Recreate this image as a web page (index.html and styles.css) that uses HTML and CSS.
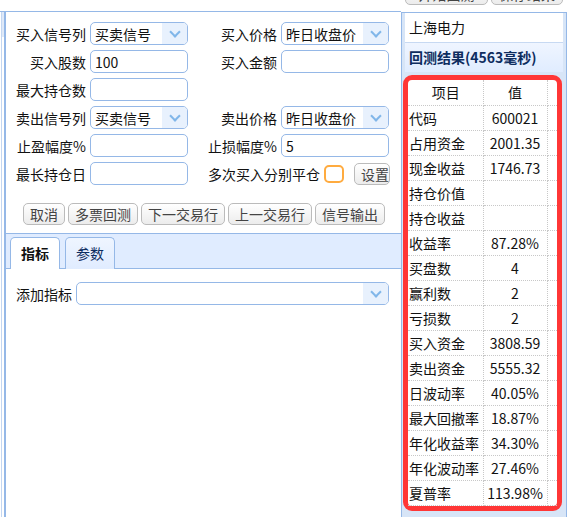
FILE: index.html
```html
<!DOCTYPE html>
<html lang="zh-CN">

<head>
    <meta charset="UTF-8">
    <title>回测</title>
    <link rel="stylesheet" href="styles.css">
</head>

<body>
    <div class="page">
        <!-- 左侧：参数设置 -->
        <div class="left">
            <div class="edge"><div class="edge-cap"></div></div>
            <div class="main">
                <div class="form">
                    <div class="row">
                        <label class="lbl">买入信号列</label>
                        <div class="combo w1"><span class="combo-text">买卖信号</span><span class="combo-arrow"></span></div>
                        <label class="lbl2">买入价格</label>
                        <div class="combo w2"><span class="combo-text">昨日收盘价</span><span class="combo-arrow"></span></div>
                    </div>
                    <div class="row">
                        <label class="lbl">买入股数</label>
                        <input class="textbox w1" type="text" value="100">
                        <label class="lbl2">买入金额</label>
                        <input class="textbox w2" type="text">
                    </div>
                    <div class="row">
                        <label class="lbl">最大持仓数</label>
                        <input class="textbox w1" type="text">
                    </div>
                    <div class="row">
                        <label class="lbl">卖出信号列</label>
                        <div class="combo w1"><span class="combo-text">买卖信号</span><span class="combo-arrow"></span></div>
                        <label class="lbl2">卖出价格</label>
                        <div class="combo w2"><span class="combo-text">昨日收盘价</span><span class="combo-arrow"></span></div>
                    </div>
                    <div class="row">
                        <label class="lbl">止盈幅度%</label>
                        <input class="textbox w1" type="text">
                        <label class="lbl2">止损幅度%</label>
                        <input class="textbox w2" type="text" value="5">
                    </div>
                    <div class="row">
                        <label class="lbl">最长持仓日</label>
                        <input class="textbox w1" type="text">
                        <div class="multi">
                            <span>多次买入分别平仓</span>
                            <span class="check"></span>
                            <span class="btn btn-set">设置</span>
                        </div>
                    </div>
                </div>

                <div class="actions">
                    <button class="btn">取消</button>
                    <button class="btn">多票回测</button>
                    <button class="btn">下一交易行</button>
                    <button class="btn">上一交易行</button>
                    <button class="btn">信号输出</button>
                </div>

                <div class="tabs">
                    <span class="tab active">指标</span>
                    <span class="tab">参数</span>
                </div>
                <div class="tab-body">
                    <div class="row">
                        <label class="lbl3">添加指标</label>
                        <div class="combo w3"><span class="combo-text"></span><span class="combo-arrow"></span></div>
                    </div>
                </div>
            </div>
        </div>

        <!-- 右侧：回测结果 -->
        <div class="side">
            <div class="side-tools">
                <button class="btn tool-a">开始回测</button>
                <button class="btn tool-b">保存结果</button>
            </div>
            <div class="side-panel">
                <div class="stock">上海电力</div>
                <div class="result-title">回测结果(4563毫秒)</div>
                <div class="frame">
                    <table class="grid">
                        <tr class="head"><td>项目</td><td>值</td><td></td></tr>
                        <tr><td>代码</td><td>600021</td><td></td></tr>
                        <tr><td>占用资金</td><td>2001.35</td><td></td></tr>
                        <tr><td>现金收益</td><td>1746.73</td><td></td></tr>
                        <tr><td>持仓价值</td><td></td><td></td></tr>
                        <tr><td>持仓收益</td><td></td><td></td></tr>
                        <tr><td>收益率</td><td>87.28%</td><td></td></tr>
                        <tr><td>买盘数</td><td>4</td><td></td></tr>
                        <tr><td>赢利数</td><td>2</td><td></td></tr>
                        <tr><td>亏损数</td><td>2</td><td></td></tr>
                        <tr><td>买入资金</td><td>3808.59</td><td></td></tr>
                        <tr><td>卖出资金</td><td>5555.32</td><td></td></tr>
                        <tr><td>日波动率</td><td>40.05%</td><td></td></tr>
                        <tr><td>最大回撤率</td><td>18.87%</td><td></td></tr>
                        <tr><td>年化收益率</td><td>34.30%</td><td></td></tr>
                        <tr><td>年化波动率</td><td>27.46%</td><td></td></tr>
                        <tr><td>夏普率</td><td>113.98%</td><td></td></tr>
                    </table>
                </div>
            </div>
        </div>
    </div>
</body>

</html>
```

FILE: styles.css
```css
/* 页面整体 */
* {
    box-sizing: border-box;
}

body {
    margin: 0;
    font-family: "Noto Sans CJK SC", "Microsoft YaHei", sans-serif;
    font-size: 14px;
    color: #111;
    background: #fff;
}

.page {
    display: flex;
    height: 517px;
    overflow: hidden;
}

/* 左侧面板 */
.left {
    width: 401px;
    flex-shrink: 0;
    margin-top: 11px;
    border-top: 1px solid #95b8e7;
    display: flex;
}

.edge {
    width: 5px;
    flex-shrink: 0;
    margin-left: 1px;
    border-left: 1px solid #c3d6f1;
    border-right: 2px solid #95b8e7;
}

.edge-cap {
    height: 25px;
    background: #dfe9f8;
}

.main {
    flex: 1;
    display: flex;
    flex-direction: column;
}

.form {
    padding-top: 10px;
}

.row {
    display: flex;
    align-items: center;
    height: 23px;
    margin-bottom: 5px;
}

.row > * {
    flex-shrink: 0;
}

.lbl {
    width: 80px;
    margin-right: 4px;
    text-align: right;
    white-space: nowrap;
}

.lbl2 {
    width: 89px;
    margin-right: 4px;
    text-align: right;
    white-space: nowrap;
}

.lbl3 {
    margin-right: 4px;
    white-space: nowrap;
}

.w1 { width: 98px; }
.w2 { width: 108px; }
.w3 { width: 313px; }

/* 输入框 */
.textbox {
    height: 23px;
    border: 1px solid #95b8e7;
    border-radius: 5px;
    padding: 0 4px;
    font: inherit;
    color: #111;
    outline: none;
}

/* 下拉框 */
.combo {
    height: 23px;
    border: 1px solid #95b8e7;
    border-radius: 5px;
    display: flex;
    align-items: center;
    overflow: hidden;
}

.combo-text {
    flex: 1;
    padding-left: 4px;
    white-space: nowrap;
}

.combo-arrow {
    width: 25px;
    height: 100%;
    background: #e8f1fd;
    position: relative;
}

.combo-arrow::after {
    content: "";
    position: absolute;
    left: 9px;
    top: 5px;
    width: 6px;
    height: 6px;
    border-right: 2px solid #80b6e9;
    border-bottom: 2px solid #80b6e9;
    transform: rotate(45deg);
}

/* 多次买入 */
.multi {
    width: 202px;
    display: flex;
    align-items: center;
    justify-content: flex-end;
    white-space: nowrap;
}

.multi > * {
    flex-shrink: 0;
}

.check {
    width: 20px;
    height: 18px;
    margin-left: 4px;
    border: 2px solid #ffab3f;
    border-radius: 5px;
    background: #fff;
}

.btn-set {
    display: inline-block;
    margin-left: 10px;
    width: 36px;
    padding: 0;
    text-align: center;
}

/* 按钮 */
.btn {
    height: 22px;
    padding: 0 6px;
    border: 1px solid #bbb;
    border-radius: 5px;
    background: linear-gradient(#ffffff, #ececec);
    color: #444;
    font: inherit;
    line-height: 20px;
    white-space: nowrap;
}

.actions {
    display: flex;
    gap: 3px;
    padding-left: 17px;
    margin-top: 13px;
}

/* 选项卡 */
.tabs {
    margin-top: 8px;
    height: 36px;
    padding: 3px 0 0 4px;
    background: #e0ecff;
    border-top: 1px solid #95b8e7;
    border-bottom: 1px solid #95b8e7;
    display: flex;
    gap: 5px;
}

.tab {
    width: 50px;
    height: 32px;
    border: 1px solid #95b8e7;
    border-bottom: none;
    border-radius: 5px 5px 0 0;
    background: linear-gradient(#eff5ff, #e0ecff);
    color: #0e2d5f;
    text-align: center;
    line-height: 30px;
}

.tab.active {
    background: #fff;
    font-weight: bold;
    color: #111;
}

.tab-body {
    padding: 13px 0 0 10px;
}

/* 右侧面板 */
.side {
    width: 166px;
    flex-shrink: 0;
    display: flex;
    flex-direction: column;
}

.side-tools {
    height: 12px;
    padding-left: 4px;
    display: flex;
    gap: 3px;
}

.side-tools .btn {
    margin-top: -17px;
}

.tool-a { width: 83px; }
.tool-b { width: 72px; }

.side-panel {
    flex: 1;
    border: 1px solid #95b8e7;
    border-bottom: none;
    background: #d7e5f7;
    padding: 0 3px;
}

.stock {
    height: 30px;
    background: #fff;
    border-bottom: 1px solid #c7d9f2;
    padding-left: 4px;
    line-height: 29px;
}

.result-title {
    height: 29px;
    padding-left: 4px;
    background: linear-gradient(#eff5ff, #e0ecff);
    color: #0e2d5f;
    font-weight: bold;
    line-height: 29px;
    white-space: nowrap;
}

.frame {
    margin: 3px 0 0 -2px;
    width: 159px;
    border: 5px solid #ff3636;
    border-radius: 9px;
    background: #fff;
}

.grid {
    width: 149px;
    border-collapse: collapse;
    table-layout: fixed;
}

.grid td {
    height: 25px;
    padding: 0;
    border: 1px dotted #c8c8c8;
    white-space: nowrap;
    text-align: center;
}

.grid td:first-child {
    width: 75px;
    text-align: left;
    padding-left: 1px;
    border-left: none;
}

.grid td:nth-child(2) {
    width: 64px;
}

.grid td:last-child {
    border-right: none;
}

.grid tr:first-child td {
    border-top: none;
}

.grid tr.head td:first-child {
    text-align: center;
}
```
